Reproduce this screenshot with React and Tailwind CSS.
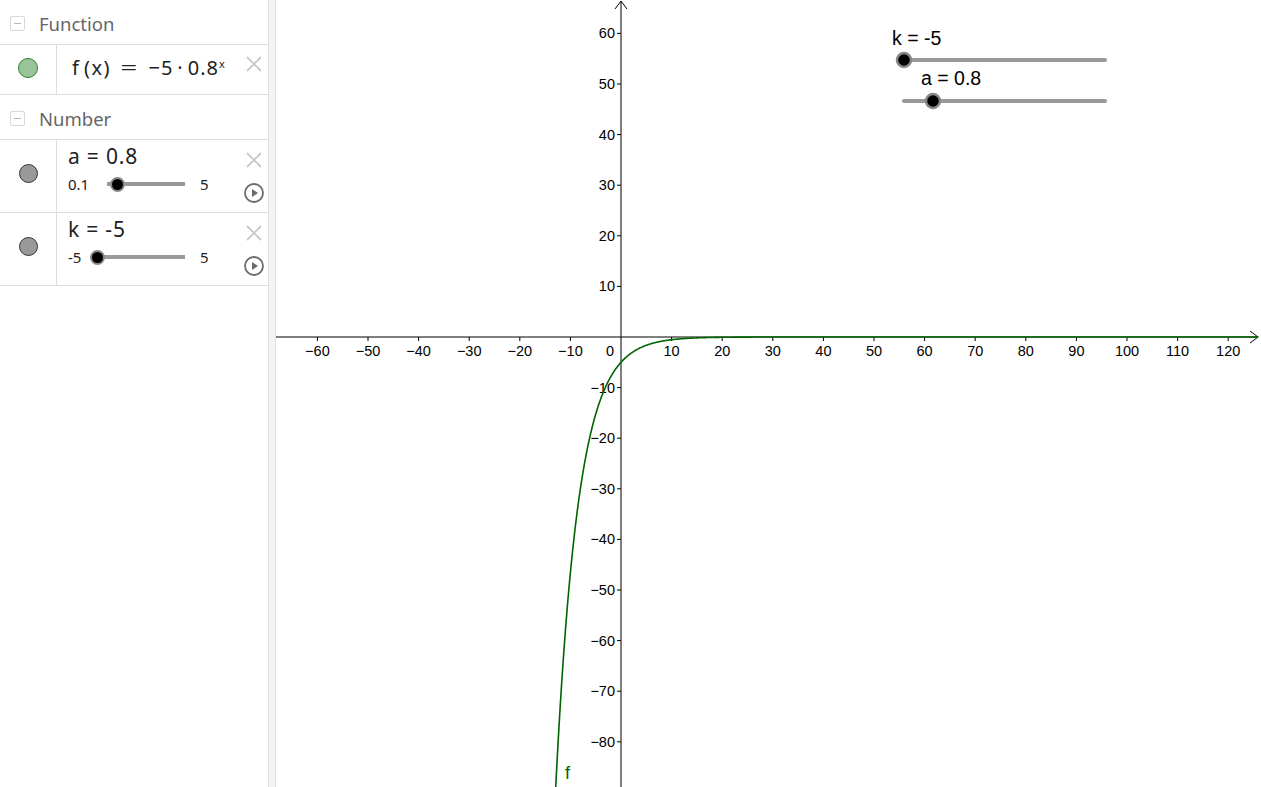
const S = 5.06;
const OX = 345;
const OY = 337;
const W = 985;
const H = 787;

const px = (x) => OX + x * S;
const py = (y) => OY - y * S;

const curve = (() => {
  const pts = [];
  for (let x = -13; x <= 126; x += 0.1) {
    pts.push(`${px(x).toFixed(2)},${py(-5 * Math.pow(0.8, x)).toFixed(2)}`);
  }
  return "M" + pts.join(" L");
})();

const xTicks = [];
for (let v = -60; v <= 120; v += 10) if (v !== 0) xTicks.push(v);
const yTicks = [];
for (let v = -80; v <= 60; v += 10) if (v !== 0) yTicks.push(v);
const fmt = (v) => (v < 0 ? "\u2212" + Math.abs(v) : String(v));

const Collapse = () => (
  <div className="w-[15px] h-[15px] rounded-[2px] border border-[#d8d8d8] flex items-center justify-center">
    <div className="w-[7px] h-[1.5px] bg-[#b5b5b5]" />
  </div>
);

const CloseX = () => (
  <svg width="18" height="18" viewBox="0 0 18 18">
    <path d="M2 2 L16 16 M16 2 L2 16" stroke="#c9c9c9" strokeWidth="1.8" />
  </svg>
);

const Play = () => (
  <svg width="22" height="22" viewBox="0 0 22 22">
    <circle cx="11" cy="11" r="9" fill="none" stroke="#6b6b6b" strokeWidth="1.8" />
    <path d="M9 7 L15 11 L9 15 Z" fill="#6b6b6b" />
  </svg>
);

const MiniSlider = ({ min, knob, trackStart }) => (
  <div className="relative h-[20px] mt-[3px] text-[15px] text-[#222]">
    <span className="absolute top-0 left-0">{min}</span>
    <div className="absolute top-[9px] h-[4px] bg-[#9a9a9a]" style={{ left: trackStart, width: 117 - trackStart }} />
    <div
      className="absolute top-[4px] w-[15px] h-[15px] rounded-full bg-black border-[2.5px] border-[#8a8a8a]"
      style={{ left: knob - 7 }}
    />
    <span className="absolute top-0 left-[132px]">5</span>
  </div>
);

const NumberRow = ({ label, min, knob, trackStart }) => (
  <div className="flex h-[73px] border-b border-[#dedede]">
    <div className="w-[57px] border-r border-[#dedede] flex items-center justify-center pb-[5px]">
      <div className="w-[19px] h-[19px] rounded-full bg-[#999] border border-[#333]" />
    </div>
    <div className="flex-1 pl-[11px] pt-[2px]">
      <div className="text-[21px] leading-[28px] tracking-[0.8px] text-[#222]">{label}</div>
      <MiniSlider min={min} knob={knob} trackStart={trackStart} />
    </div>
    <div className="w-[30px] flex flex-col items-center pt-[11px] gap-[13px] pl-[2px]">
      <CloseX />
      <Play />
    </div>
  </div>
);

const Header = ({ title }) => (
  <div className="flex items-center h-[45px] border-b border-[#dedede] pl-[10px] pt-[3px] gap-[14px]">
    <Collapse />
    <span className="text-[18.5px] text-[#666]">{title}</span>
  </div>
);

export default function App() {
  return (
    <div className="flex w-[1261px] h-[787px] overflow-hidden bg-white" style={{ fontFamily: '"Noto Sans", "Open Sans", sans-serif' }}>
      <div className="w-[268px] shrink-0 flex flex-col">
        <Header title="Function" />
        <div className="flex h-[50px] border-b border-[#dedede]">
          <div className="w-[57px] border-r border-[#dedede] flex items-center justify-center pb-[3px]">
            <div className="w-[20px] h-[20px] rounded-full bg-[#99c499] border border-[#2e7d2e]" />
          </div>
          <div className="flex-1 pl-[15px] pb-[3px] flex items-center text-[20px] text-[#222]">
            <span>f</span>
            <span className="ml-[5px] tracking-[1.5px]">(x)</span>
            <span className="ml-[12px] mr-[3px] inline-block scale-x-150">=</span>
            <span className="ml-[11px] tracking-[1px]">−5</span>
            <span className="ml-[4px]">·</span>
            <span className="ml-[5px] tracking-[1px]">0.8</span>
            <span className="text-[11px] self-start mt-[11px]">x</span>
          </div>
          <div className="w-[30px] flex pt-[10px] justify-center pl-[2px]">
            <CloseX />
          </div>
        </div>
        <Header title="Number" />
        <NumberRow label="a = 0.8" min="0.1" knob={49} trackStart={39} />
        <NumberRow label="k = -5" min="-5" knob={29} trackStart={29} />
      </div>
      <div className="w-[8px] shrink-0 bg-[#f4f4f4] border-l border-r border-[#dcdcdc]" />
      <div className="flex-1 relative">
        <svg width={W} height={H} className="block" style={{ fontFamily: '"Liberation Sans", Arial, sans-serif' }}>
          <line x1="0" y1={OY} x2={W - 3} y2={OY} stroke="#000" strokeWidth="1" />
          <path d={`M${W - 11} ${OY - 6} L${W - 3} ${OY} L${W - 11} ${OY + 6}`} fill="none" stroke="#000" strokeWidth="1" />
          <line x1={OX} y1="1" x2={OX} y2={H} stroke="#000" strokeWidth="1" />
          <path d={`M${OX - 6} 9 L${OX} 1 L${OX + 6} 9`} fill="none" stroke="#000" strokeWidth="1" />
          {xTicks.map((v) => (
            <g key={"x" + v}>
              <line x1={px(v)} y1={OY} x2={px(v)} y2={OY + 4} stroke="#000" />
              <text x={px(v)} y={OY + 19} fontSize="14.5" textAnchor="middle" fill="#000">
                {fmt(v)}
              </text>
            </g>
          ))}
          <text x={OX - 7} y={OY + 19} fontSize="14.5" textAnchor="end">0</text>
          {yTicks.map((v) => (
            <g key={"y" + v}>
              <line x1={OX - 4} y1={py(v)} x2={OX} y2={py(v)} stroke="#000" />
              <text x={OX - 6} y={py(v) + 5} fontSize="14.5" textAnchor="end" fill="#000">
                {fmt(v)}
              </text>
            </g>
          ))}
          <path d={curve} fill="none" stroke="#006400" strokeWidth="1.6" />
          <text x="289" y="779" fontSize="18" fill="#006400">f</text>

          <text x="616" y="45" fontSize="19.5" fill="#000">k = -5</text>
          <line x1="628" y1="60" x2="829" y2="60" stroke="#999" strokeWidth="4" strokeLinecap="round" />
          <circle cx="628" cy="60" r="7" fill="#000" stroke="#888" strokeWidth="2.5" />
          <text x="645" y="85" fontSize="19.5" fill="#000">a = 0.8</text>
          <line x1="628" y1="101" x2="829" y2="101" stroke="#999" strokeWidth="4" strokeLinecap="round" />
          <circle cx="657" cy="101" r="7" fill="#000" stroke="#888" strokeWidth="2.5" />
        </svg>
      </div>
    </div>
  );
}
